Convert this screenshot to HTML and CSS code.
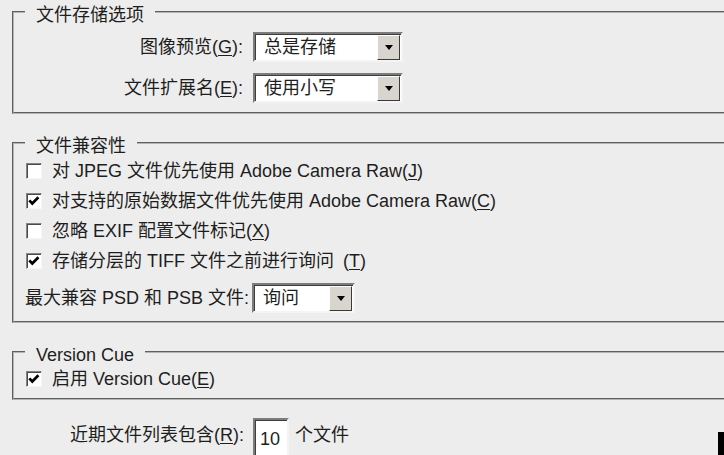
FILE: index.html
```html
<!DOCTYPE html>
<html lang="zh-CN">
<head>
<meta charset="utf-8">
<title>文件处理</title>
<link rel="stylesheet" href="styles.css">
</head>
<body>
<fieldset class="group g-save">
  <legend>文件存储选项</legend>
  <div class="form-row">
    <span class="lbl-right">图像预览(<u>G</u>):</span>
    <div class="combo w150"><span class="combo-val">总是存储</span><span class="combo-btn"><span class="tri"></span></span></div>
  </div>
  <div class="form-row">
    <span class="lbl-right">文件扩展名(<u>E</u>):</span>
    <div class="combo w150"><span class="combo-val">使用小写</span><span class="combo-btn"><span class="tri"></span></span></div>
  </div>
</fieldset>

<fieldset class="group g-compat">
  <legend>文件兼容性</legend>
  <div class="check-row"><span class="cb"></span><span>对 JPEG 文件优先使用 Adobe Camera Raw(<u>J</u>)</span></div>
  <div class="check-row"><span class="cb"><svg viewBox="0 0 14 14" width="14" height="14"><polyline points="2.3,6.3 5.3,9.5 11.4,3.3" fill="none" stroke="#000" stroke-width="2.7"/></svg></span><span>对支持的原始数据文件优先使用 Adobe Camera Raw(<u>C</u>)</span></div>
  <div class="check-row"><span class="cb"></span><span>忽略 EXIF 配置文件标记(<u>X</u>)</span></div>
  <div class="check-row"><span class="cb"><svg viewBox="0 0 14 14" width="14" height="14"><polyline points="2.3,6.3 5.3,9.5 11.4,3.3" fill="none" stroke="#000" stroke-width="2.7"/></svg></span><span>存储分层的 TIFF 文件之前进行询问&ensp;(<u>T</u>)</span></div>
  <div class="form-row psd">
    <span>最大兼容 PSD 和 PSB 文件:</span>
    <div class="combo w103"><span class="combo-val">询问</span><span class="combo-btn"><span class="tri"></span></span></div>
  </div>
</fieldset>

<fieldset class="group g-cue">
  <legend>Version Cue</legend>
  <div class="check-row"><span class="cb"><svg viewBox="0 0 14 14" width="14" height="14"><polyline points="2.3,6.3 5.3,9.5 11.4,3.3" fill="none" stroke="#000" stroke-width="2.7"/></svg></span><span>启用 Version Cue(<u>E</u>)</span></div>
</fieldset>

<div class="recent">
  <span class="recent-lbl">近期文件列表包含(<u>R</u>):</span>
  <span class="field">10</span>
  <span class="recent-lbl">个文件</span>
</div>

<div class="edge"></div>
</body>
</html>
```

FILE: styles.css
```css
* { box-sizing: border-box; }

html, body {
  margin: 0;
  width: 724px;
  height: 455px;
  overflow: hidden;
}

body {
  position: relative;
  background: #ededed;
  color: #1e1e1e;
  font-family: "Liberation Sans", "Noto Sans CJK SC", sans-serif;
  font-size: 18px;
  line-height: 22px;
}

u { text-underline-offset: 2px; }

.group {
  margin: 0 -20px 0 12px;
  padding: 8px 12px 9px;
  border: 2px groove #b4b4b4;
  min-width: 0;
}

.group legend {
  margin-left: -1px;
  padding: 6px 11px 0;
  line-height: 18px;
}

.g-compat { margin-top: 17px; padding-top: 1px; padding-bottom: 8px; }
.g-cue { margin-top: 17px; padding-top: 0; padding-bottom: 4px; }

.form-row {
  display: flex;
  align-items: center;
  height: 30px;
}
.form-row + .form-row { margin-top: 11px; }

.lbl-right {
  width: 217px;
  text-align: right;
  margin-right: 10px;
}

.combo {
  display: flex;
  height: 30px;
  background: #fff;
  border: 2px solid;
  border-color: #7c7c7c #f4f4f4 #f4f4f4 #7c7c7c;
  box-shadow: inset 1px 1px 0 #3e3e3e;
}
.w150 { width: 150px; }
.w103 { width: 103px; }

.combo-val {
  flex: 1;
  padding: 0 0 0 9px;
  line-height: 26px;
  white-space: nowrap;
}

.combo-btn {
  width: 23px;
  margin: 1px 1px 0 0;
  background: #d8d5ce;
  border: 1px solid;
  border-color: #fdfdfd #3a3a3a #3a3a3a #fdfdfd;
  display: flex;
  align-items: center;
  justify-content: center;
}

.tri {
  width: 0;
  height: 0;
  border-left: 4px solid transparent;
  border-right: 4px solid transparent;
  border-top: 5px solid #000;
}

.check-row {
  display: flex;
  align-items: center;
  height: 30px;
  gap: 10px;
}

.cb {
  width: 16px;
  height: 16px;
  flex: none;
  background: #fff;
  border: 1px solid;
  border-color: #858585 #f6f6f6 #f6f6f6 #858585;
  box-shadow: inset 1px 1px 0 #4a4a4a;
  display: flex;
  align-items: center;
  justify-content: center;
}
.cb svg { display: block; }

.psd {
  margin-top: 7px;
  margin-left: -1px;
  gap: 3px;
}

.recent {
  display: flex;
  align-items: flex-start;
  margin: 18px 0 0 70px;
  gap: 6px;
}
.recent-lbl { padding-top: 6px; }
.recent-lbl:first-child { margin-right: 3px; }

.field {
  width: 36px;
  height: 40px;
  padding: 8px 0 0 5px;
  background: #fff;
  border: 2px solid;
  border-color: #7c7c7c #f4f4f4 #f4f4f4 #7c7c7c;
  box-shadow: inset 1px 1px 0 #3e3e3e;
}

.edge {
  position: absolute;
  right: 0;
  bottom: 0;
  width: 6px;
  height: 23px;
  background: #000;
}
```
